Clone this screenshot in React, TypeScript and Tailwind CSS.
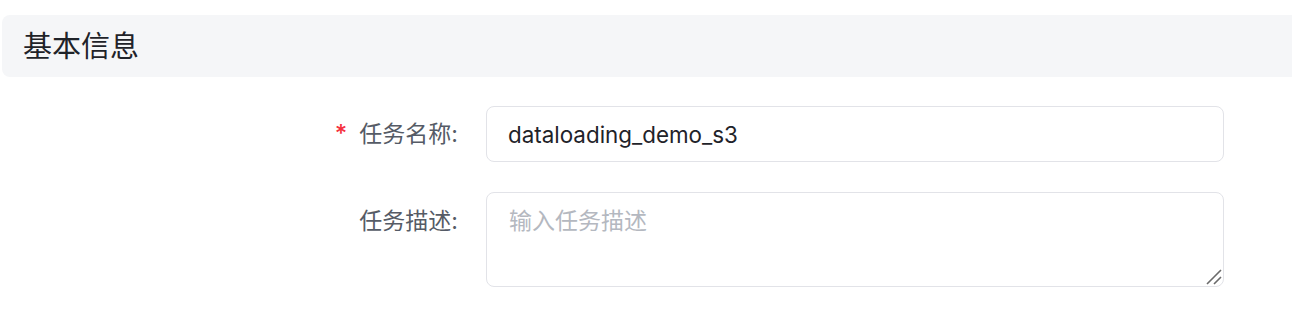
import React from "react";

const font = { fontFamily: '"Inter", "Noto Sans CJK SC", sans-serif' };

export default function App() {
  return (
    <div className="h-[330px] w-full overflow-hidden bg-white" style={font}>
      {/* Section header */}
      <div className="pl-[2px] pt-[15px]">
        <div className="flex h-[62px] items-center rounded-l-lg bg-[#f5f6f8] pl-[21px]">
          <span className="text-[29px] leading-none text-[#1f2329]">基本信息</span>
        </div>
      </div>

      {/* Form */}
      <div className="mt-[29px] flex flex-col gap-[30px]">
        <div className="flex items-center">
          <label className="flex w-[486px] items-center justify-end pr-[28px] text-[23px] text-[#555b66]">
            <span className="mr-[12px] text-[24px] font-medium leading-none text-[#f5313d]">*</span>
            任务名称:
          </label>
          <input
            className="h-[56px] w-[738px] rounded-lg border border-[#e2e3e8] bg-white px-[21px] text-[22.4px] text-[#1f2329] outline-none"
            defaultValue="dataloading_demo_s3"
            style={font}
          />
        </div>

        <div className="flex items-start">
          <label className="w-[486px] pr-[28px] pt-[13px] text-right text-[23px] leading-[32px] text-[#555b66]">
            任务描述:
          </label>
          <div className="relative">
            <textarea
              className="block h-[95px] w-[738px] resize-none rounded-lg border border-[#e2e3e8] bg-white px-[22px] pt-[12px] text-[23px] leading-[32px] text-[#1f2329] outline-none placeholder:text-[#b4b8c0]"
              placeholder="输入任务描述"
              style={font}
            />
            <svg className="pointer-events-none absolute bottom-[2px] right-[2px]" width="17" height="17" viewBox="0 0 17 17">
              <path d="M2 16 L16 2 M9 16 L16 9" stroke="#6b6b6b" strokeWidth="1.6" />
            </svg>
          </div>
        </div>
      </div>
    </div>
  );
}
